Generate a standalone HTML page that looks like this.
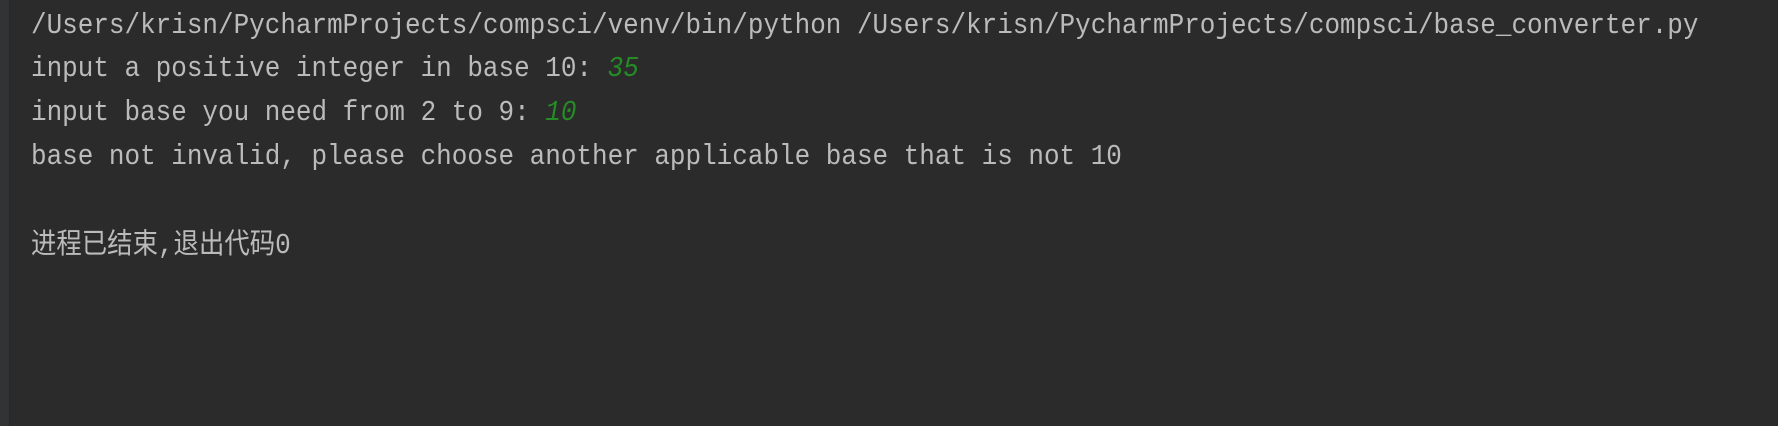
<!DOCTYPE html>
<html><head><meta charset="utf-8"><style>
html,body{margin:0;padding:0;}
body{width:1778px;height:426px;background:#2b2b2b;position:relative;overflow:hidden;
font-family:"Liberation Mono","Noto Sans CJK SC",monospace;font-size:25.97px;color:#bbbbbb;}
.stripe{position:absolute;left:0;top:0;width:9px;height:426px;background:#313335;border-right:1px solid #282828;}
.l{position:absolute;left:31px;height:44px;line-height:44px;white-space:pre;transform:scaleY(1.12);transform-origin:0 29px;}
.g{color:#268a26;font-style:italic;}
</style></head><body>
<div class="stripe"></div>
<div class="l" style="top:4px">/Users/krisn/PycharmProjects/compsci/venv/bin/python /Users/krisn/PycharmProjects/compsci/base_converter.py</div>
<div class="l" style="top:47px">input a positive integer in base 10: <span class="g">35</span></div>
<div class="l" style="top:91px">input base you need from 2 to 9: <span class="g">10</span></div>
<div class="l" style="top:135px">base not invalid, please choose another applicable base that is not 10</div>
<div class="l" style="top:224px;"><span style="font-size:25.4px">进程已结束</span>,<span style="font-size:25.4px">退出代码</span>0</div>
</body></html>
